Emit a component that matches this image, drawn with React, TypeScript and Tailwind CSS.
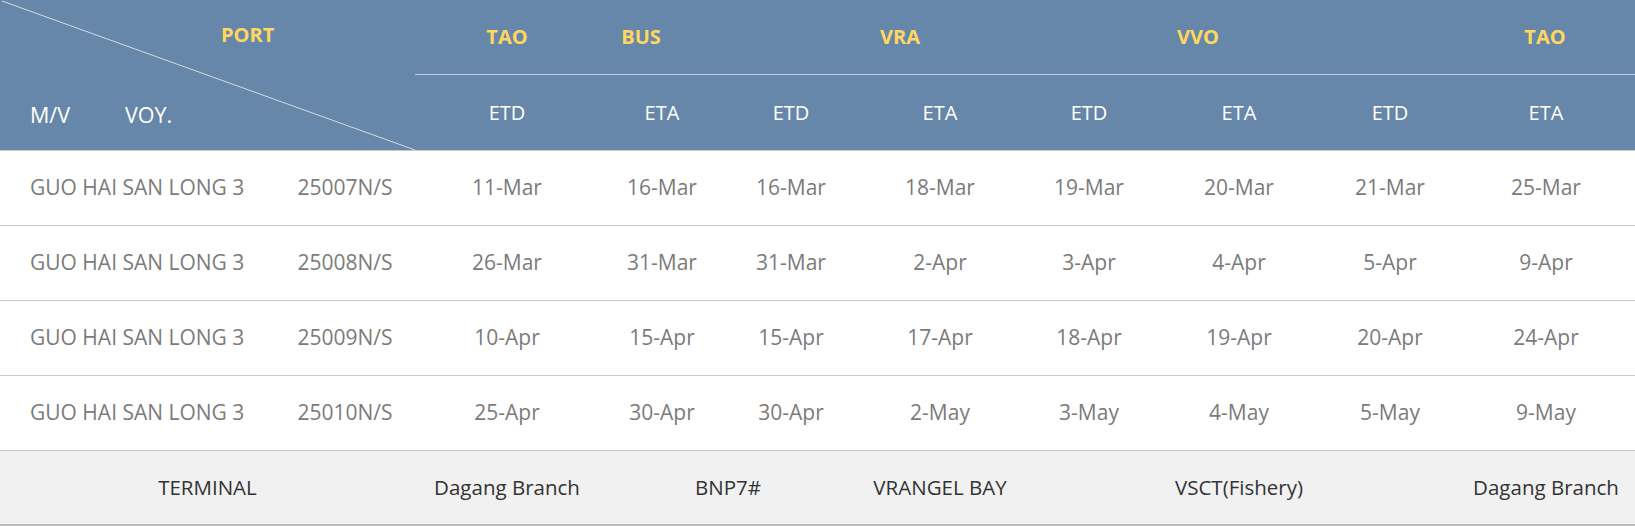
import React from "react";

// column widths for the 8 date columns (TAO ETD .. TAO ETA)
const cols = ["w-[184px]", "w-[126px]", "w-[132px]", "w-[166px]", "w-[132px]", "w-[168px]", "w-[134px]", "w-[178px]"];
const subHeads = ["ETD", "ETA", "ETD", "ETA", "ETD", "ETA", "ETD", "ETA"];

const rows = [
  { voy: "25007N/S", dates: ["11-Mar", "16-Mar", "16-Mar", "18-Mar", "19-Mar", "20-Mar", "21-Mar", "25-Mar"] },
  { voy: "25008N/S", dates: ["26-Mar", "31-Mar", "31-Mar", "2-Apr", "3-Apr", "4-Apr", "5-Apr", "9-Apr"] },
  { voy: "25009N/S", dates: ["10-Apr", "15-Apr", "15-Apr", "17-Apr", "18-Apr", "19-Apr", "20-Apr", "24-Apr"] },
  { voy: "25010N/S", dates: ["25-Apr", "30-Apr", "30-Apr", "2-May", "3-May", "4-May", "5-May", "9-May"] },
];

function App() {
  return (
    <div className="w-[1635px] bg-white font-['Open_Sans',sans-serif]">
      {/* header */}
      <div className="flex h-[150px] bg-[#6787aa]">
        {/* diagonal cell */}
        <div className="relative w-[415px] flex flex-col">
          <svg className="absolute inset-0" width="415" height="150" viewBox="0 0 415 150">
            <line x1="2" y1="1" x2="415" y2="150" stroke="#d5dae2" strokeWidth="1" />
          </svg>
          <div className="h-[75px] flex items-center pl-[221px] pb-[5px]">
            <span className="text-[20px] font-bold text-[#ffd75e]">PORT</span>
          </div>
          <div className="flex-1 flex items-center pt-[6px] text-[21.5px] text-white">
            <span className="pl-[30px]">M/V</span>
            <span className="pl-[55px]">VOY.</span>
          </div>
        </div>
        {/* port / etd-eta cells */}
        <div className="flex-1 flex flex-col">
          <div className="h-[75px] flex items-center border-b border-[#c3cedb] text-[20px] font-bold text-[#ffd75e]">
            <div className="w-[184px] text-center">TAO</div>
            <div className="w-[84px] text-center">BUS</div>
            <div className="w-[434px] text-center">VRA</div>
            <div className="w-[162px] text-center">VVO</div>
            <div className="w-[176px]"></div>
            <div className="w-[180px] text-center">TAO</div>
          </div>
          <div className="flex-1 flex items-center text-[20px] text-white">
            {subHeads.map((h, i) => (
              <div key={i} className={`${cols[i]} text-center`}>
                {h}
              </div>
            ))}
          </div>
        </div>
      </div>

      {/* schedule rows */}
      {rows.map((r) => (
        <div key={r.voy} className="flex items-center h-[75px] border-t border-[#c8c8c8] text-[21px] text-[#7b7b7b]">
          <div className="w-[275px] pl-[30px] whitespace-nowrap">GUO HAI SAN LONG 3</div>
          <div className="w-[140px] text-center">{r.voy}</div>
          {r.dates.map((d, i) => (
            <div key={i} className={`${cols[i]} text-center`}>
              {d}
            </div>
          ))}
        </div>
      ))}

      {/* terminal row */}
      <div className="flex items-center h-[76px] border-t border-b-2 border-t-[#c8c8c8] border-b-[#bcbcbc] bg-[#f1f1f1] text-[20.5px] text-[#333]">
        <div className="w-[415px] text-center">TERMINAL</div>
        <div className="w-[184px] text-center">Dagang Branch</div>
        <div className="w-[258px] text-center">BNP7#</div>
        <div className="w-[166px] text-center">VRANGEL BAY</div>
        <div className="w-[132px]"></div>
        <div className="w-[168px] text-center">VSCT(Fishery)</div>
        <div className="w-[134px]"></div>
        <div className="w-[178px] text-center">Dagang Branch</div>
      </div>
    </div>
  );
}

export default App;
